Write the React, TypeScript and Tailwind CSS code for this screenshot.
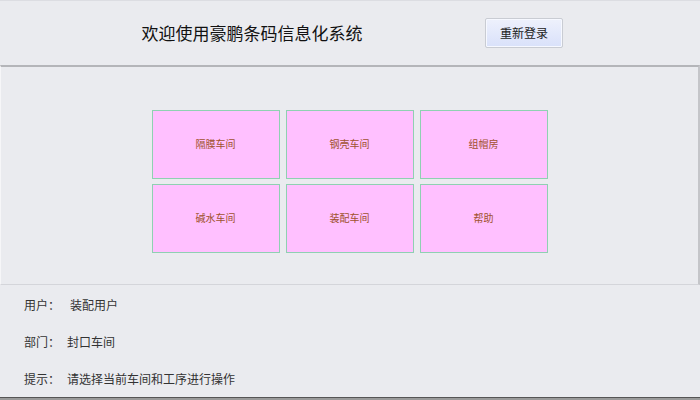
const cells = ["隔膜车间", "钢壳车间", "组帽房", "碱水车间", "装配车间", "帮助"];

const info = [
  { label: "用户：", value: "装配用户", gap: "pl-[10px]" },
  { label: "部门：", value: "封口车间", gap: "pl-[7px]" },
  { label: "提示：", value: "请选择当前车间和工序进行操作", gap: "pl-[7px]" },
];

export default function App() {
  return (
    <div
      className="flex h-[400px] w-[700px] flex-col overflow-hidden bg-[#eaebef] text-[#222]"
      style={{ fontFamily: '"Noto Sans CJK SC", "Noto Sans", sans-serif' }}
    >
      {/* 标题栏 */}
      <div className="flex h-[65px] shrink-0 items-center border-t border-[#dcdde2]">
        <div className="w-[504px] pb-[2px] text-center text-[17px] leading-none text-[#111]">
          欢迎使用豪鹏条码信息化系统
        </div>
        <button
          type="button"
          className="ml-[-19px] h-[30px] w-[78px] rounded-[2px] border border-[#c9ccd3] bg-gradient-to-b from-[#eef1fc] to-[#d9e1fa] text-[12px] text-[#222] shadow-[inset_0_0_0_1px_#f6f8ff]"
        >
          重新登录
        </button>
      </div>

      {/* 车间面板 */}
      <div className="flex h-[220px] shrink-0 justify-center border-t-2 border-r-2 border-b border-l border-t-[#b4b5b9] border-r-[#c4c5c9] border-b-[#d4d5da] border-l-[#f6f6f8] pt-[43px]">
        <div className="grid h-[143px] grid-cols-[128px_128px_128px] grid-rows-[69px_69px] gap-x-[6px] gap-y-[5px]">
          {cells.map((c) => (
            <button
              key={c}
              type="button"
              className="flex items-center justify-center border border-[#8fd0b2] bg-[#ffc0ff] pb-[2px] text-[10px] text-[#a0522d]"
            >
              {c}
            </button>
          ))}
        </div>
      </div>

      {/* 用户信息 */}
      <div className="flex flex-1 flex-col pl-[24px] pt-[1px] text-[12px] text-[#333]">
        {info.map((r) => (
          <div key={r.label} className="flex h-[37px] items-center">
            <span>{r.label}</span>
            <span className={r.gap}>{r.value}</span>
          </div>
        ))}
      </div>
      <div className="h-[3px] shrink-0 border-t border-[#555] bg-[#9a9a9a]" />
    </div>
  );
}
